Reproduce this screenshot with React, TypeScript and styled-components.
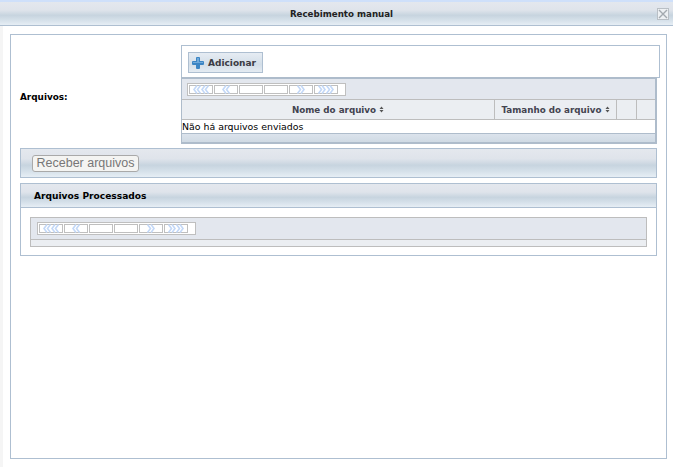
import React from 'react';
import styled, { createGlobalStyle } from 'styled-components';

const Global = createGlobalStyle`
    html, body {
        margin: 0;
        padding: 0;
        background: #fff;
    }
    * {
        box-sizing: border-box;
    }
`;

const barGradient = 'linear-gradient(to bottom, #e4e8ee 0%, #dfe4eb 35%, #c7d4df 58%, #d6e1ea 80%, #e6eef5 100%)';

const Dialog = styled.div`
    width: 673px;
    height: 467px;
    display: flex;
    flex-direction: column;
    overflow: hidden;
    font-family: "DejaVu Sans", Verdana, sans-serif;
    font-size: 9.4px;
    color: #000;
`;

const TitleBar = styled.div`
    height: 26px;
    flex: none;
    display: flex;
    align-items: center;
    justify-content: center;
    position: relative;
    padding-left: 10px;
    background: ${barGradient};
    border-top: 2px solid #cfe0fa;
    border-bottom: 1px solid #aebfd1;
    font-weight: bold;
    font-size: 8.7px;
    color: #222;
`;

const CloseButton = styled.div`
    position: absolute;
    right: 4px;
    top: 6px;
    width: 12px;
    height: 12px;
    border: 1px solid #b9bfc5;
    background: #eef1f4;
    display: flex;
`;

const Body = styled.div`
    flex: 1;
    padding: 8px 0 8px 7px;
    border-left: 3px solid #f5f5f5;
    display: flex;
`;

const Panel = styled.div`
    flex: none;
    width: 657px;
    border: 1px solid #aebfd1;
    padding: 10px 6px 0 9px;
    display: flex;
    flex-direction: column;
`;

const FormRow = styled.div`
    display: flex;
    align-items: center;
`;

const FieldLabel = styled.div`
    width: 161px;
    flex: none;
    padding-top: 5px;
    font-weight: bold;
    font-size: 8.9px;
`;

const FieldValue = styled.div`
    width: 479px;
    flex: none;
`;

const Toolbar = styled.div`
    height: 33px;
    border: 1px solid #aebfd1;
    padding: 6px;
    display: flex;
    align-items: flex-start;
`;

const AddButton = styled.div`
    height: 21px;
    width: 75px;
    display: flex;
    align-items: center;
    gap: 4px;
    padding-left: 3px;
    border: 1px solid #aebfd1;
    background: linear-gradient(to bottom, #e6ecf3, #d3dee8 60%, #e4ebf2);
    font-weight: bold;
    font-size: 9px;
    color: #3c3c44;
`;

const Grid = styled.div`
    width: 476px;
    margin-top: -1px;
    border: 2px solid #aebccb;
    border-left-width: 1px;
`;

const Pager = styled.div`
    height: 20px;
    background: #e3e7ee;
    padding: 4px 5px;
    display: flex;
    align-items: flex-start;
`;

const PagerBox = styled.div`
    display: flex;
    gap: 1px;
    height: 13px;
    width: 159px;
    padding: 1px;
    background: #fff;
    border: 1px solid #bfbfbf;
`;

const PagerCell = styled.div`
    width: 24px;
    height: 9px;
    border: 1px solid #bfbfbf;
    background: #fff;
    display: flex;
    align-items: center;
    justify-content: center;
    flex: none;
`;

const HeaderRow = styled.div`
    display: flex;
    height: 21px;
    background: #ebeef2;
    border-top: 1px solid #bdbdbd;
    border-bottom: 1px solid #bdbdbd;
`;

const HeaderCell = styled.div<{ $w: number }>`
    width: ${(p) => p.$w}px;
    flex: none;
    display: flex;
    align-items: center;
    justify-content: center;
    gap: 3px;
    white-space: nowrap;
    font-weight: bold;
    font-size: 8.75px;
    color: #444450;
    border-right: 1px solid #bdbdbd;
    &:last-child {
        border-right: none;
    }
`;

const EmptyRow = styled.div`
    height: 13px;
    line-height: 14px;
    background: #fff;
`;

const GridFooter = styled.div`
    height: 9px;
    border-top: 1px solid #aebccb;
    background: linear-gradient(to bottom, #dbe3ec, #cfdae4);
`;

const ActionBar = styled.div`
    margin-top: 4px;
    width: 637px;
    height: 30px;
    border: 1px solid #aebfd1;
    background: ${barGradient};
    display: flex;
    align-items: center;
    padding-left: 11px;
`;

const ReceiveButton = styled.button`
    height: 17px;
    width: 107px;
    padding: 0;
    border: 1px solid #a9a9a9;
    border-radius: 3px;
    background: #f4f4f2;
    color: #777;
    font-family: "Liberation Sans", Arial, sans-serif;
    font-size: 12.5px;
`;

const Section = styled.div`
    margin-top: 5px;
    width: 637px;
    height: 73px;
    border: 1px solid #aebfd1;
`;

const SectionHead = styled.div`
    height: 24px;
    background: ${barGradient};
    border-bottom: 1px solid #aebfd1;
    display: flex;
    align-items: center;
    padding-left: 13px;
    font-weight: bold;
    font-size: 9.1px;
`;

const SectionBody = styled.div`
    padding: 9px 9px 0;
`;

const SmallGrid = styled.div`
    height: 30px;
    border: 1px solid #bdbdbd;
    background: #ebeef2;
`;

const SmallPager = styled(Pager)`
    height: 22px;
    border-bottom: 1px solid #bdbdbd;
    padding: 4px 6px;
`;

const Sort = () => (
    <svg width="5" height="7" viewBox="0 0 5 7">
        <path d="M2.5 0.5 L4.5 3 H0.5 Z M2.5 6.5 L0.5 4 H4.5 Z" fill="#555" />
    </svg>
);

// blue double chevrons of the pager, drawn pointing left or right
const Chevrons = ({ groups, flip }: { groups: number; flip?: boolean }) => {
    const w = groups * 8;
    return (
        <svg width={w} height="9" viewBox={`0 0 ${w} 9`} style={flip ? { transform: 'scaleX(-1)' } : undefined}>
            {Array.from({ length: groups }).map((_, i) => (
                <g key={i} transform={`translate(${i * 8} 0)`} fill="none" stroke="#c3d8f7" strokeWidth="1.6">
                    <path d="M4 0.5 L1 4.5 L4 8.5" />
                    <path d="M7.5 0.5 L4.5 4.5 L7.5 8.5" />
                </g>
            ))}
        </svg>
    );
};

const PagerCells = () => (
    <PagerBox>
        <PagerCell><Chevrons groups={2} /></PagerCell>
        <PagerCell><Chevrons groups={1} /></PagerCell>
        <PagerCell />
        <PagerCell />
        <PagerCell><Chevrons groups={1} flip /></PagerCell>
        <PagerCell><Chevrons groups={2} flip /></PagerCell>
    </PagerBox>
);

const App = () => (
    <Dialog>
        <Global />
        <TitleBar>
            Recebimento manual
            <CloseButton>
                <svg width="10" height="10" viewBox="0 0 10 10">
                    <path d="M1 1 L9 9 M9 1 L1 9" stroke="#a4aab0" strokeWidth="1.4" />
                </svg>
            </CloseButton>
        </TitleBar>
        <Body>
            <Panel>
                <FormRow>
                    <FieldLabel>Arquivos:</FieldLabel>
                    <FieldValue>
                        <Toolbar>
                            <AddButton>
                                <svg width="12" height="12" viewBox="0 0 12 12">
                                    <path d="M4 1 Q4 0 5 0 H7 Q8 0 8 1 V4 H11 Q12 4 12 5 V7 Q12 8 11 8 H8 V11 Q8 12 7 12 H5 Q4 12 4 11 V8 H1 Q0 8 0 7 V5 Q0 4 1 4 H4 Z" fill="#3b85c4" />
                                    <path d="M5 1 H7 V5 H11 V6 H1 V5 H5 Z" fill="#6fa9da" />
                                </svg>
                                Adicionar
                            </AddButton>
                        </Toolbar>
                        <Grid>
                            <Pager>
                                <PagerCells />
                            </Pager>
                            <HeaderRow>
                                <HeaderCell $w={313}>Nome do arquivo <Sort /></HeaderCell>
                                <HeaderCell $w={122}>Tamanho do arquivo <Sort /></HeaderCell>
                                <HeaderCell $w={20} />
                                <HeaderCell $w={18} />
                            </HeaderRow>
                            <EmptyRow>Não há arquivos enviados</EmptyRow>
                            <GridFooter />
                        </Grid>
                    </FieldValue>
                </FormRow>
                <ActionBar>
                    <ReceiveButton>Receber arquivos</ReceiveButton>
                </ActionBar>
                <Section>
                    <SectionHead>Arquivos Processados</SectionHead>
                    <SectionBody>
                        <SmallGrid>
                            <SmallPager>
                                <PagerCells />
                            </SmallPager>
                        </SmallGrid>
                    </SectionBody>
                </Section>
            </Panel>
        </Body>
    </Dialog>
);

export default App;
